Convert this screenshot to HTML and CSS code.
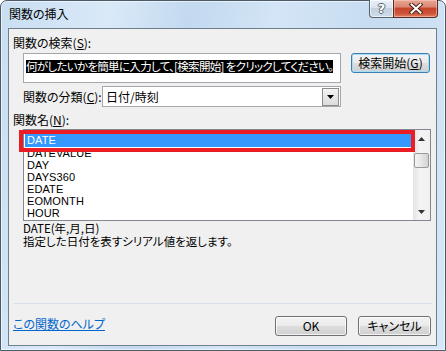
FILE: index.html
```html
<!DOCTYPE html>
<html lang="ja">
<head>
<meta charset="utf-8">
<title>関数の挿入</title>
<link rel="stylesheet" href="styles.css">
</head>
<body>
<div class="window">
  <div class="titlebar">
    <span class="title">関数の挿入</span>
    <div class="caption-buttons">
      <div class="cap-btn help"><span class="help-glyph">?</span></div>
      <div class="cap-btn close">
        <svg width="14" height="11" viewBox="0 0 14 11">
          <path d="M2.5 1.5 L11.5 9.5 M11.5 1.5 L2.5 9.5" stroke="#4a2418" stroke-width="4" stroke-linecap="square" fill="none"/>
          <path d="M2.5 1.5 L11.5 9.5 M11.5 1.5 L2.5 9.5" stroke="#ffffff" stroke-width="2" stroke-linecap="square" fill="none"/>
        </svg>
      </div>
    </div>
  </div>
  <div class="client">
    <div class="label first-label">関数の検索(<u>S</u>):</div>
    <div class="search-row">
      <div class="textbox"><span class="sel">何がしたいかを簡単に入力して、[検索開始] をクリックしてください。</span></div>
      <button class="btn default search-btn">検索開始(<u>G</u>)</button>
    </div>
    <div class="cat-row">
      <span class="cat-label">関数の分類(<u>C</u>):</span>
      <div class="combo">
        <span class="combo-text">日付/時刻</span>
        <span class="drop">
          <svg width="7" height="4" viewBox="0 0 7 4"><path d="M0 0 H7 L3.5 4 Z" fill="#000"/></svg>
        </span>
      </div>
    </div>
    <div class="label name-label">関数名(<u>N</u>):</div>
    <div class="listbox">
      <div class="items">
        <div class="item selected">DATE</div>
        <div class="item">DATEVALUE</div>
        <div class="item">DAY</div>
        <div class="item">DAYS360</div>
        <div class="item">EDATE</div>
        <div class="item">EOMONTH</div>
        <div class="item">HOUR</div>
      </div>
      <div class="scrollbar">
        <div class="sb-arrow">
          <svg width="7" height="4" viewBox="0 0 7 4"><path d="M3.5 0 L7 4 H0 Z" fill="#333"/></svg>
        </div>
        <div class="sb-track">
          <div class="sb-thumb"></div>
        </div>
        <div class="sb-arrow">
          <svg width="7" height="4" viewBox="0 0 7 4"><path d="M0 0 H7 L3.5 4 Z" fill="#333"/></svg>
        </div>
      </div>
      <div class="annot"></div>
    </div>
    <div class="desc">
      <div class="desc-line">DATE(年,月,日)</div>
      <div class="desc-line">指定した日付を表すシリアル値を返します。</div>
    </div>
    <div class="spacer"></div>
    <div class="sep"></div>
    <div class="bottom-row">
      <a class="help-link" href="#">この関数のヘルプ</a>
      <div class="btns">
        <button class="btn ok-btn">OK</button>
        <button class="btn cancel-btn">キャンセル</button>
      </div>
    </div>
  </div>
</div>
</body>
</html>
```
FILE: styles.css
```css
html, body {
  margin: 0;
  padding: 0;
}
body {
  width: 446px;
  height: 351px;
  overflow: hidden;
  background: #ffffff;
  font-family: "Noto Sans CJK JP", "Liberation Sans", sans-serif;
  font-size: 12px;
  font-feature-settings: "palt";
  color: #000;
}
.window {
  box-sizing: border-box;
  width: 446px;
  height: 351px;
  border: 1px solid #4d5b69;
  border-radius: 7px 7px 0 0;
  background: linear-gradient(100deg, #c9def2 0%, #d9e9f8 22%, #c3d9ef 38%, #d3e5f6 55%, #c7dcf1 75%, #d6e7f7 100%);
  box-shadow: inset 0 0 0 1px rgba(255,255,255,0.55);
  padding: 0 8px 4px 7px;
  display: flex;
  flex-direction: column;
}
.titlebar {
  height: 27px;
  display: flex;
  align-items: flex-start;
  flex: none;
}
.title {
  margin-top: 6px;
  padding-left: 1px;
  line-height: 14px;
  font-size: 12px;
  color: #000;
}
.caption-buttons {
  margin-left: auto;
  margin-top: -1px;
  margin-right: -1px;
  display: flex;
}
.cap-btn {
  box-sizing: border-box;
  height: 18px;
  display: flex;
  align-items: center;
  justify-content: center;
}
.help {
  width: 24px;
  border: 1px solid #56646f;
  border-right: none;
  border-top: none;
  border-radius: 0 0 0 4px;
  background: linear-gradient(#e9f1f9 0%, #d9e4ef 45%, #c3d1df 50%, #cfdce8 100%);
  box-shadow: inset 0 0 0 1px rgba(255,255,255,0.6);
}
.help-glyph {
  font-family: "DejaVu Sans", sans-serif;
  font-weight: bold;
  font-size: 13px;
  line-height: 14px;
  color: #ffffff;
  text-shadow: 1px 0 #59636d, -1px 0 #59636d, 0 1px #59636d, 0 -1px #59636d;
}
.close {
  width: 45px;
  border: 1px solid #5b2a20;
  border-top: none;
  border-radius: 0 0 4px 0;
  background: linear-gradient(#e9a796 0%, #dc8670 40%, #c6452b 50%, #cd5538 80%, #e0825e 100%);
  box-shadow: inset 0 0 0 1px rgba(255,210,200,0.5);
}
.client {
  flex: 1;
  box-sizing: border-box;
  border: 1px solid #6f7f8e;
  background: #f0f0f0;
  display: flex;
  flex-direction: column;
  padding: 0 4px 9px 4px;
  min-height: 0;
}
.label {
  line-height: 14px;
}
.first-label {
  margin-top: 7px;
}
u {
  text-decoration: underline;
  text-underline-offset: 1px;
}
.search-row {
  margin-top: 3px;
  margin-left: 10px;
  display: flex;
  align-items: flex-start;
}
.textbox {
  box-sizing: border-box;
  width: 318px;
  height: 30px;
  border: 1px solid #a4a7ad;
  background: #fff;
  padding: 3px 0 0 2px;
  overflow: hidden;
  white-space: nowrap;
}
.sel {
  display: inline-block;
  background: #000;
  color: #fff;
  height: 13px;
  line-height: 13px;
  font-size: 11.5px;
  letter-spacing: -0.68px;
}
.btn {
  box-sizing: border-box;
  height: 20px;
  border: 1px solid #707070;
  border-radius: 3px;
  background: linear-gradient(#f2f2f2 0%, #ebebeb 48%, #dddddd 52%, #cfcfcf 100%);
  box-shadow: inset 0 0 0 1px rgba(255,255,255,0.75);
  font-family: "Noto Sans CJK JP", "Liberation Sans", sans-serif;
  font-feature-settings: "palt";
  font-size: 12px;
  line-height: 16px;
  color: #000;
  padding: 0;
  margin: 0;
}
.btn.default {
  border-color: #3c7fb1;
  box-shadow: inset 0 0 0 1px #a6dcf6;
}
.search-btn {
  margin-left: 10px;
  width: 79px;
}
.cat-row {
  margin-top: 3px;
  margin-left: 10px;
  display: flex;
  align-items: center;
}
.cat-label {
  width: 79px;
  line-height: 14px;
  flex: none;
}
.combo {
  box-sizing: border-box;
  width: 239px;
  height: 21px;
  border: 1px solid #a4a7ad;
  background: #fff;
  display: flex;
  align-items: center;
  padding: 0 1px 0 3px;
}
.combo-text {
  flex: 1;
  line-height: 14px;
}
.drop {
  box-sizing: border-box;
  width: 17px;
  height: 18px;
  border: 1px solid #8c8c8c;
  background: linear-gradient(#f4f4f4, #dcdcdc);
  display: flex;
  align-items: center;
  justify-content: center;
}
.name-label {
  margin-top: 6px;
}
.listbox {
  position: relative;
  box-sizing: border-box;
  margin-top: 2px;
  margin-left: 10px;
  width: 408px;
  height: 92px;
  border: 1px solid #828790;
  background: #fff;
  display: flex;
}
.items {
  flex: 1;
  padding: 4px 0 0 1px;
  overflow: hidden;
}
.item {
  height: 12px;
  line-height: 12px;
  padding-left: 2px;
  font-family: "Liberation Sans", sans-serif;
  font-size: 11px;
  letter-spacing: 0.1px;
  white-space: nowrap;
}
.item.selected {
  height: 13px;
  line-height: 13px;
  background: #3399ff;
  color: #fff;
}
.scrollbar {
  width: 17px;
  flex: none;
  display: flex;
  flex-direction: column;
  background: linear-gradient(90deg, #e3e3e3, #f4f4f4 40%, #f0f0f0);
}
.sb-arrow {
  height: 17px;
  display: flex;
  align-items: center;
  justify-content: center;
  flex: none;
}
.sb-track {
  flex: 1;
  padding-top: 6px;
}
.sb-thumb {
  box-sizing: border-box;
  margin: 0 1px;
  height: 15px;
  border: 1px solid #9a9a9a;
  border-radius: 2px;
  background: linear-gradient(90deg, #f3f3f3 0%, #e6e6e6 50%, #d2d2d2 100%);
}
.annot {
  position: absolute;
  left: -5px;
  top: 0px;
  width: 396px;
  height: 22px;
  box-sizing: border-box;
  border: 4px solid #ec1c24;
  pointer-events: none;
}
.desc {
  margin-top: 1px;
  margin-left: 10px;
}
.desc-line {
  height: 13px;
  line-height: 13px;
  font-size: 11.5px;
}
.spacer {
  flex: 1;
}
.sep {
  height: 1px;
  background: #d7dee6;
  margin-left: 1px;
}
.bottom-row {
  margin-top: 12px;
  display: flex;
  align-items: flex-start;
}
.help-link {
  line-height: 14px;
  margin-top: 1px;
  color: #0066cc;
  text-decoration: underline;
}
.btns {
  margin-left: auto;
  margin-right: 1px;
  display: flex;
  gap: 11px;
}
.ok-btn {
  width: 72px;
}
.cancel-btn {
  width: 73px;
}
```
